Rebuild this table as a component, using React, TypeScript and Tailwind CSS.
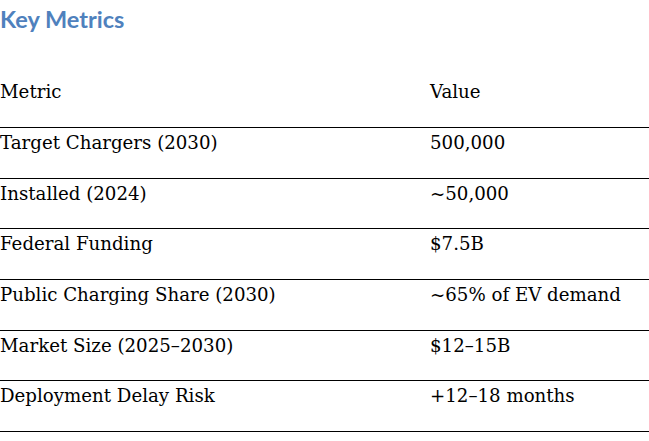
import React from "react";

const rows: [string, string][] = [
  ["Target Chargers (2030)", "500,000"],
  ["Installed (2024)", "~50,000"],
  ["Federal Funding", "$7.5B"],
  ["Public Charging Share (2030)", "~65% of EV demand"],
  ["Market Size (2025–2030)", "$12–15B"],
  ["Deployment Delay Risk", "+12–18 months"],
];

export default function App() {
  return (
    <div className="w-[649px] h-[441px] overflow-hidden bg-white text-black">
      <h2 className="m-0 h-[44px] pt-[5px] text-[23.5px] leading-[28px] font-bold text-[#4f81bd] [font-family:Lato,'Open_Sans',sans-serif]">
        Key Metrics
      </h2>
      <div className="[font-family:'DejaVu_Serif',serif] text-[18.2px] leading-[26px]">
        <div className="flex h-[83px] pt-[35px]">
          <div className="w-[430px]">Metric</div>
          <div>Value</div>
        </div>
        {rows.map(([k, v]) => (
          <div key={k} className="flex h-[50.67px] border-t border-black pt-[2px]">
            <div className="w-[430px]">{k}</div>
            <div>{v}</div>
          </div>
        ))}
        <div className="border-t border-black" />
      </div>
    </div>
  );
}
